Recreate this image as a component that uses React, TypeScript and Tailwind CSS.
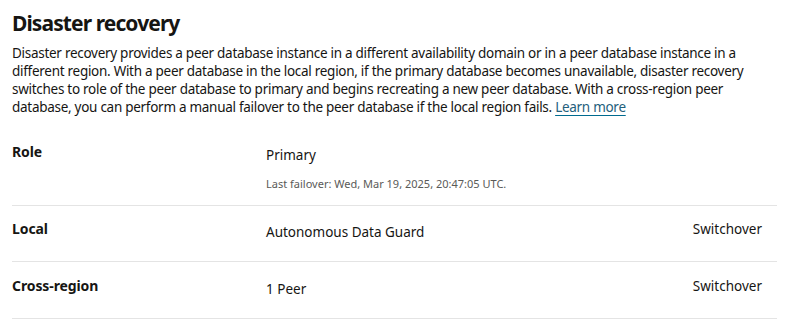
import React from "react";

const rows = [
  {
    label: "Role",
    value: "Primary",
    note: "Last failover: Wed, Mar 19, 2025, 20:47:05 UTC.",
    action: "",
  },
  { label: "Local", value: "Autonomous Data Guard", note: "", action: "Switchover" },
  { label: "Cross-region", value: "1 Peer", note: "", action: "Switchover" },
];

export default function App() {
  return (
    <div className="w-[795px] h-[321px] bg-white text-[#161513] font-['Noto_Sans',sans-serif] overflow-hidden">
      <div className="pl-3 pr-[18px] pt-[9px]">
        <h2 className="text-[21px] leading-[28px] font-bold tracking-[-0.9px]">Disaster recovery</h2>
        <p className="mt-[7px] text-[13.5px] leading-[18px] tracking-[-0.28px] whitespace-nowrap">
          Disaster recovery provides a peer database instance in a different availability domain or in a peer database instance in a
          <br />
          different region. With a peer database in the local region, if the primary database becomes unavailable, disaster recovery
          <br />
          switches to role of the peer database to primary and begins recreating a new peer database. With a cross-region peer
          <br />
          database, you can perform a manual failover to the peer database if the local region fails.{" "}
          <a href="#" className="text-[#24607c] underline decoration-[#006b8f] underline-offset-[3px]">
            Learn more
          </a>
        </p>

        <div className="mt-[13px]">
          {rows.map((r, i) => (
            <div
              key={r.label}
              className={
                i === 0
                  ? "grid grid-cols-[254px_1fr_auto] border-b border-[#e4e4e4] pt-[13px] pb-[13px]"
                  : i === 1
                  ? "grid grid-cols-[254px_1fr_auto] border-b border-[#e4e4e4] pt-[13px] pb-[19px]"
                  : "grid grid-cols-[254px_1fr_auto] border-b border-[#e4e4e4] pt-[14px] pb-[19px]"
              }
            >
              <div className="text-[14px] leading-5 font-bold tracking-[-0.1px]">{r.label}</div>
              <div className="pt-[3px]">
                <div className="text-[13.5px] leading-5">{r.value}</div>
                {r.note && (
                  <div className="mt-[11px] text-[11px] leading-4 text-[#5a5a58]">{r.note}</div>
                )}
              </div>
              <div className="pr-[15px] text-[13.5px] leading-5">{r.action}</div>
            </div>
          ))}
        </div>
      </div>
    </div>
  );
}
